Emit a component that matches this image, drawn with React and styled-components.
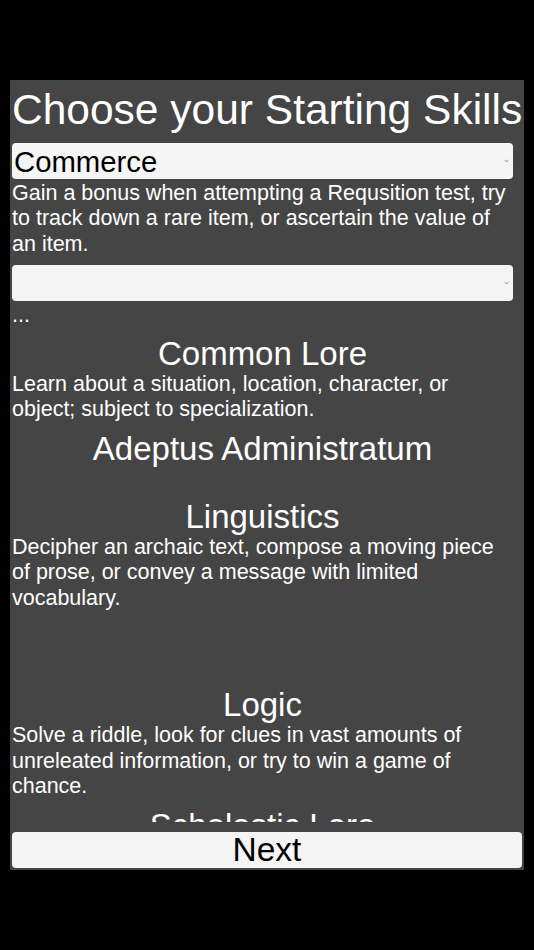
import React from 'react';
import styled, { createGlobalStyle } from 'styled-components';

const GlobalStyle = createGlobalStyle`
    html, body {
        margin: 0;
        padding: 0;
        background: #000000;
    }
    body {
        font-family: 'Liberation Sans', Arial, sans-serif;
    }
`;

const Screen = styled.div`
    width: 534px;
    height: 950px;
    padding-top: 80px;
    box-sizing: border-box;
    background: #000000;
`;

const Panel = styled.div`
    margin: 0 10px;
    height: 790px;
    box-sizing: border-box;
    padding: 7px 2px 2px;
    background: #454545;
    display: flex;
    flex-direction: column;
`;

const Title = styled.h1`
    margin: 0;
    font-size: 42.5px;
    line-height: 46px;
    font-weight: 400;
    color: #ffffff;
    white-space: nowrap;
`;

const Scroller = styled.div`
    flex: 1;
    min-height: 0;
    margin-top: 10px;
    padding-right: 9px;
    overflow: hidden;
    display: flex;
    flex-direction: column;
`;

const SelectWrap = styled.div`
    position: relative;
    flex: none;
    margin-top: ${props => props.gap || 0}px;
`;

const Select = styled.select`
    appearance: none;
    -webkit-appearance: none;
    display: block;
    width: 100%;
    height: 36px;
    margin: 0;
    padding: 0 16px 0 2px;
    border: 0;
    border-radius: 4px;
    background: #f5f5f5;
    color: #000000;
    font-family: 'Liberation Sans', Arial, sans-serif;
    font-size: 29.3px;
    outline: none;
`;

const Chevron = styled.svg`
    position: absolute;
    right: 4px;
    top: 16px;
    width: 5px;
    height: 4px;
    pointer-events: none;
`;

const Text = styled.p`
    margin: ${props => props.gap || 0}px 0 0;
    font-size: 21.5px;
    line-height: 25.5px;
    color: #ffffff;
`;

const Skill = styled.section`
    flex: none;
    margin-top: ${props => props.gap || 8}px;
`;

const Heading = styled.h2`
    margin: 0;
    font-size: 33px;
    line-height: 36px;
    font-weight: 400;
    text-align: center;
    color: #ffffff;
    white-space: nowrap;
`;

// empty when the specialization has not been picked yet
const Specialty = styled(Heading)`
    margin: 8px 0 24px;
    min-height: 36px;
`;

const NextButton = styled.button`
    flex: none;
    height: 36px;
    margin-top: 10px;
    padding: 0;
    border: 0;
    border-radius: 4px;
    background: #f5f5f5;
    color: #000000;
    font-family: 'Liberation Sans', Arial, sans-serif;
    font-size: 33.5px;
    line-height: 36px;
    text-align: center;
`;

const Dropdown = ({ value, options, gap }) => (
    <SelectWrap gap={gap}>
        <Select value={value} onChange={() => {}}>
            {options.map(o => <option key={o} value={o}>{o}</option>)}
        </Select>
        <Chevron viewBox="0 0 5 4">
            <path d="M0.5 0.8 L2.5 3 L4.5 0.8" fill="none" stroke="#8a8a8a" strokeWidth="0.9" />
        </Chevron>
    </SelectWrap>
);

const skills = [
    {
        name: 'Common Lore',
        text: 'Learn about a situation, location, character, or object; subject to specialization.',
        specialty: 'Adeptus Administratum',
        gap: 7,
    },
    {
        name: 'Linguistics',
        text: 'Decipher an archaic text, compose a moving piece of prose, or convey a message with limited vocabulary.',
        specialty: '',
    },
    {
        name: 'Logic',
        text: 'Solve a riddle, look for clues in vast amounts of unreleated information, or try to win a game of chance.',
    },
    {
        name: 'Scholastic Lore',
        text: 'Recall facts and figures from scholarly learning; subject to specialization.',
        specialty: '',
    },
];

export default function App() {
    return (
        <Screen>
            <GlobalStyle />
            <Panel>
                <Title>Choose your Starting Skills</Title>
                <Scroller>
                    <Dropdown value="Commerce" options={['Commerce', 'Charm', 'Deceive', 'Inquiry']} />
                    <Text gap={1.5}>
                        Gain a bonus when attempting a Requsition test, try to track down a rare item, or ascertain the value of an item.
                    </Text>
                    <Dropdown value="" options={['', 'Awareness', 'Dodge', 'Scrutiny']} gap={8} />
                    <Text gap={2}>...</Text>
                    {skills.map(skill => (
                        <Skill key={skill.name} gap={skill.gap}>
                            <Heading>{skill.name}</Heading>
                            <Text>{skill.text}</Text>
                            {skill.specialty !== undefined && <Specialty>{skill.specialty}</Specialty>}
                        </Skill>
                    ))}
                </Scroller>
                <NextButton>Next</NextButton>
            </Panel>
        </Screen>
    );
}
